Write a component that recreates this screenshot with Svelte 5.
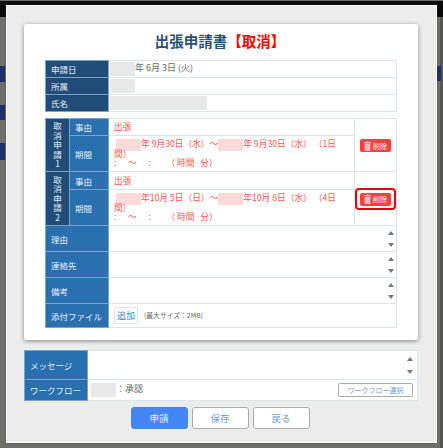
<script>
  const requests = [
    { no: 1, from: '年 9月30日（水）', to: '年 9月30日（水）', days: '（1日間）', top: 17 },
    { no: 2, from: '年10月 5日（日）', to: '年10月 8日（水）', days: '（4日間）', top: 18, focus: true },
  ];
  const boxes = ['理由', '連絡先', '備考'];
</script>

<style>
  :global(body) {
    margin: 0;
    background: #6f6f6b;
  }

  .screen {
    position: relative;
    width: 443px;
    height: 448px;
    overflow: hidden;
    box-sizing: border-box;
    padding-top: 5px;
    font-family: "Noto Sans CJK JP", "Liberation Sans", sans-serif;
    font-size: 8.5px;
    color: #666;
  }

  /* what shows of the page behind the dialog */
  .band {
    position: absolute;
    top: 1px;
    left: 0;
    right: 0;
    height: 16px;
    background: #0a0a0a;
  }

  .chunk {
    position: absolute;
    background: #1f2f6b;
  }

  .edge {
    position: absolute;
    top: 17px;
    right: 0;
    bottom: 0;
    width: 3px;
    background: #555;
  }

  .modal {
    position: relative;
    width: 431px;
    height: 438px;
    margin-left: 6px;
    box-sizing: border-box;
    padding: 18px 18px 0 17px;
    background: #ececec;
    border: 1px solid #fff;
    box-shadow: 0 0 1px #333;
  }

  .sheet {
    height: 316px;
    box-sizing: border-box;
    padding: 7px 21px 0;
    background: #fff;
    border-radius: 2px;
    box-shadow: 0 1px 4px rgba(0, 0, 0, 0.45);
  }

  h1 {
    margin: 0 0 9px;
    padding-right: 2px;
    text-align: center;
    font-size: 14.5px;
    line-height: 20px;
    font-weight: 700;
    color: #2a5078;
  }

  h1 span {
    color: #f00;
  }

  table {
    width: 352px;
    border-collapse: collapse;
    table-layout: fixed;
    background: #fff;
  }

  td,
  th {
    border: 1px solid #dde2ec;
    padding: 0 5px;
    font-weight: 400;
    text-align: left;
    line-height: 12px;
  }

  th {
    color: #e8eef6;
    background: #2a70b0;
    border-color: #7aa3cc;
  }

  th.dark {
    background: #1f4d78;
  }

  .info {
    margin-bottom: 6px;
  }

  .info tr {
    height: 17px;
  }

  .info td {
    padding: 0 1px;
    font-size: 9px;
  }

  .mask {
    display: inline-block;
    width: 25px;
    height: 14px;
    vertical-align: middle;
    background: #e8e8e8;
  }

  .wide {
    width: 97px;
  }

  .num {
    padding: 0;
    text-align: center;
    line-height: 9.5px;
  }

  .red {
    padding: 0 14px 0 5px;
    color: #f55;
    font-size: 8.7px;
    line-height: 9.3px;
    white-space: pre-wrap;
  }

  .pink {
    display: inline-block;
    width: 25px;
    height: 12px;
    margin: -2px 0;
    vertical-align: middle;
    background: #fdd9d9;
  }

  .indent {
    margin-left: 2px;
  }

  .period {
    height: 36px;
  }

  .action {
    padding: 0;
    text-align: center;
  }

  .delete {
    position: relative;
    display: inline-flex;
    align-items: center;
    justify-content: center;
    gap: 2px;
    width: 31px;
    height: 13px;
    padding: 0;
    border: 0;
    border-radius: 2px;
    background: #f8413a;
    color: #ffeeee;
    font: inherit;
    font-size: 7.2px;
    vertical-align: middle;
  }

  .focus::after {
    content: "";
    position: absolute;
    inset: -5px -5px -4px;
    border: 2px solid #e60012;
    border-radius: 4px;
  }

  .box {
    height: 26px;
  }

  .box td {
    padding: 0;
  }

  .arrows {
    display: flex;
    flex-direction: column;
    align-items: flex-end;
    gap: 8px;
    padding-right: 2px;
  }

  .arrows i {
    width: 0;
    height: 0;
    border-left: 3px solid transparent;
    border-right: 3px solid transparent;
  }

  .arrows .up {
    border-bottom: 4px solid #777;
  }

  .arrows .down {
    border-top: 4px solid #777;
  }

  .file {
    height: 24px;
  }

  .add {
    display: inline-block;
    width: 22px;
    height: 15px;
    margin-right: 6px;
    border: 1px solid #e2e2e2;
    color: #4a80c0;
    font-size: 9px;
    line-height: 15px;
    text-align: center;
    vertical-align: middle;
  }

  .limit {
    font-size: 6.8px;
    color: #666;
  }

  .flow {
    width: 394px;
    margin-top: 10px;
  }

  .flow .message {
    height: 29px;
  }

  .flow .route {
    height: 21px;
  }

  .flow td {
    padding: 0 4px 0 3px;
    font-size: 9px;
  }

  .flow .arrows {
    padding-right: 0;
    gap: 9px;
  }

  .flow-row {
    display: flex;
    align-items: center;
    justify-content: space-between;
  }

  .pick {
    width: 75px;
    height: 14px;
    padding: 0;
    border: 1px solid #aaa;
    border-radius: 2px;
    background: #fff;
    color: #6a9be8;
    font: inherit;
    font-size: 7px;
    line-height: 12px;
  }

  .actions {
    display: flex;
    justify-content: center;
    gap: 4px;
    margin-top: 6px;
    padding-right: 2px;
  }

  .actions button {
    width: 57px;
    height: 22px;
    padding: 0;
    border: 1px solid #aaa;
    border-radius: 3px;
    background: #fff;
    color: #6a9be8;
    font: inherit;
    font-size: 9.5px;
  }

  .actions .primary {
    border-color: #4287f5;
    background: #4287f5;
    color: #e8f0fe;
  }
</style>

<div class="screen">
  <div class="band"></div>
  <div class="edge"></div>
  <div class="chunk" style="left: 0; top: 66px; width: 5px; height: 16px"></div>
  <div class="chunk" style="left: 0; top: 105px; width: 5px; height: 15px"></div>
  <div class="chunk" style="left: 0; top: 143px; width: 5px; height: 17px"></div>
  <div class="chunk" style="right: 2px; top: 66px; width: 5px; height: 15px"></div>

  <div class="modal">
    <div class="sheet">
      <h1>出張申請書<span>【取消】</span></h1>

      <table class="info">
        <colgroup><col style="width: 63px" /><col /></colgroup>
        <tbody>
          <tr><th class="dark">申請日</th><td><span class="mask"></span>年 6月 3日 (火)</td></tr>
          <tr><th class="dark">所属</th><td><span class="mask"></span></td></tr>
          <tr><th class="dark">氏名</th><td><span class="mask wide"></span></td></tr>
        </tbody>
      </table>

      <table>
        <colgroup><col style="width: 24px" /><col style="width: 39px" /><col /><col style="width: 42px" /></colgroup>
        <tbody>
          {#each requests as r}
            <tr style="height: {r.top}px">
              <th class="dark num" rowspan="2">取<br />消<br />申<br />請<br />{r.no}</th>
              <th>事由</th>
              <td class="red">出張</td>
              <td class="action" rowspan="2">
                <button class="delete" class:focus={r.focus}>
                  <svg width="7" height="10" viewBox="0 0 7 10">
                    <path d="M2.3 1V.4h2.4V1H7v1.2H0V1z" fill="#fbd0d0" />
                    <path d="M.6 2.8h5.8V10H.6z" fill="#fbb8c0" />
                  </svg>
                  削除
                </button>
              </td>
            </tr>
            <tr class="period">
              <th>期間</th>
              <td class="red"><span class="pink indent"></span>{r.from}～<span class="pink"></span>{r.to} {r.days}<br />:      ～      :        （ 時間   分）</td>
            </tr>
          {/each}
          {#each boxes as label}
            <tr class="box">
              <th colspan="2">{label}</th>
              <td colspan="2"><div class="arrows"><i class="up"></i><i class="down"></i></div></td>
            </tr>
          {/each}
          <tr class="file">
            <th colspan="2">添付ファイル</th>
            <td colspan="2"><span class="add">追加</span><span class="limit">(最大サイズ：2MB)</span></td>
          </tr>
        </tbody>
      </table>
    </div>

    <table class="flow">
      <colgroup><col style="width: 63px" /><col /></colgroup>
      <tbody>
        <tr class="message">
          <th>メッセージ</th>
          <td><div class="arrows"><i class="up"></i><i class="down"></i></div></td>
        </tr>
        <tr class="route">
          <th>ワークフロー</th>
          <td>
            <div class="flow-row">
              <span><span class="mask"></span>：承認</span>
              <button class="pick">ワークフロー選択</button>
            </div>
          </td>
        </tr>
      </tbody>
    </table>

    <div class="actions">
      <button class="primary">申請</button>
      <button>保存</button>
      <button>戻る</button>
    </div>
  </div>
</div>
